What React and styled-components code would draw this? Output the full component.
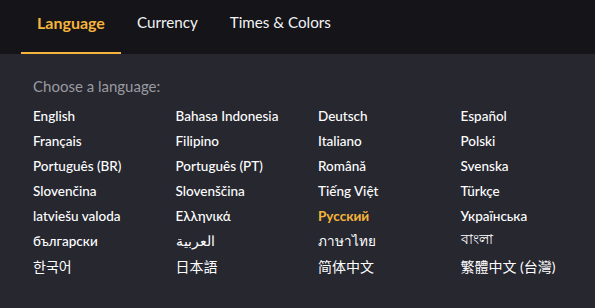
import React from 'react';
import styled, { createGlobalStyle } from 'styled-components';

const GlobalStyle = createGlobalStyle`
  html, body {
    margin: 0;
    padding: 0;
    background: #26272f;
  }
  body {
    font-family: Lato, "Noto Sans", "Noto Sans CJK SC", sans-serif;
    -webkit-font-smoothing: antialiased;
  }
`;

const Panel = styled.div`
  width: 595px;
  height: 308px;
  background: #26272f;
  overflow: hidden;
`;

const TabBar = styled.div`
  display: flex;
  height: 54px;
  padding-left: 21px;
  background: #141419;
`;

const Tab = styled.button`
  display: flex;
  align-items: center;
  padding: 0 16px 8px;
  border: 0;
  border-bottom: 2px solid ${(p) => (p.$active ? '#f5b43c' : 'transparent')};
  background: none;
  color: ${(p) => (p.$active ? '#f5b43c' : '#f2f3f5')};
  font-family: inherit;
  font-size: ${(p) => (p.$active ? 16 : 15.2)}px;
  font-weight: ${(p) => (p.$active ? 700 : 400)};
  cursor: pointer;
`;

const Body = styled.div`
  padding: 23px 0 0 33px;
`;

const Prompt = styled.div`
  color: #9a9ba1;
  font-size: 15px;
  margin-bottom: 8px;
`;

const LangGrid = styled.div`
  display: grid;
  grid-template-columns: repeat(4, 142.5px);
  grid-auto-rows: 25px;
`;

const Lang = styled.a`
  align-self: center;
  color: ${(p) => (p.$current ? '#f5b43c' : '#ffffff')};
  font-size: ${(p) => (p.$cjk ? 14 : 13.5)}px;
  font-weight: ${(p) => (p.$current ? 700 : p.$cjk ? 400 : 500)};
  text-decoration: none;
  cursor: pointer;
`;

const languages = [
  'English', 'Bahasa Indonesia', 'Deutsch', 'Español',
  'Français', 'Filipino', 'Italiano', 'Polski',
  'Português (BR)', 'Português (PT)', 'Română', 'Svenska',
  'Slovenčina', 'Slovenščina', 'Tiếng Việt', 'Türkçe',
  'latviešu valoda', 'Ελληνικά', 'Русский', 'Українська',
  'български', 'العربية', 'ภาษาไทย', 'বাংলা',
  '한국어', '日本語', '简体中文', '繁體中文 (台灣)',
];

const cjk = ['한국어', '日本語', '简体中文', '繁體中文 (台灣)'];

export default function App() {
  return (
    <Panel>
      <GlobalStyle />
      <TabBar>
        <Tab $active>Language</Tab>
        <Tab>Currency</Tab>
        <Tab>Times &amp; Colors</Tab>
      </TabBar>
      <Body>
        <Prompt>Choose a language:</Prompt>
        <LangGrid>
          {languages.map((name) => (
            <Lang key={name} $current={name === 'Русский'} $cjk={cjk.includes(name)}>
              {name}
            </Lang>
          ))}
        </LangGrid>
      </Body>
    </Panel>
  );
}
